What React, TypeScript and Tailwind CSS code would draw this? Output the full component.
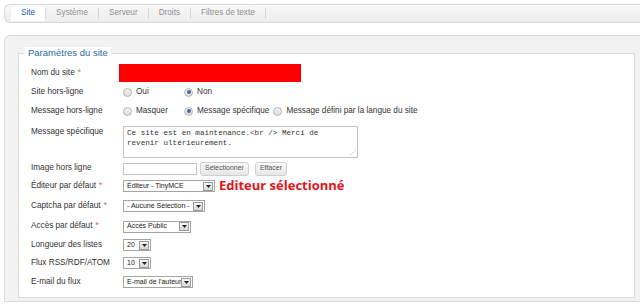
import React from 'react';

const TABS = ['Site', 'Système', 'Serveur', 'Droits', 'Filtres de texte'];

const Radio = ({ checked }: { checked?: boolean }) => (
  <span className="inline-flex items-center justify-center w-[9px] h-[9px] rounded-full border border-[#b5b5b5] bg-gradient-to-b from-[#f4f4f4] to-[#dcdcdc] mr-[4px]">
    {checked && <span className="w-[4px] h-[4px] rounded-full bg-[#3b6aa0]" />}
  </span>
);

const Select = ({ value, width }: { value: string; width: string }) => (
  <div className={`flex items-center h-[12px] border border-[#a5a5a5] bg-white ${width}`}>
    <span className="flex-1 pl-[3px] text-[7px] text-[#222] whitespace-nowrap overflow-hidden">{value}</span>
    <span className="flex items-center justify-center w-[10px] h-[9px] mr-[1px] border border-[#9a9a9a] bg-gradient-to-b from-[#f7f7f7] to-[#d8d8d8]">
      <svg width="5" height="3" viewBox="0 0 5 3"><path d="M0 0h5L2.5 3z" fill="#222" /></svg>
    </span>
  </div>
);

const Label = ({ text, req }: { text: string; req?: boolean }) => (
  <div className="w-[92px] shrink-0 whitespace-nowrap">
    {text}
    {req && <span className="text-[#e05a3a] ml-[3px]">*</span>}
  </div>
);

export default function App() {
  return (
    <div className="w-[640px] h-[304px] bg-white overflow-hidden text-[8.2px] text-[#333]" style={{ fontFamily: '"Liberation Sans", Arial, sans-serif' }}>
      {/* Tabs */}
      <div className="pt-[4px] pl-[4px]">
        <div className="flex items-center h-[19px] border border-r-0 border-[#d8d8d8] rounded-l-[6px] bg-gradient-to-b from-[#f8f8f8] to-[#ededed] pl-[6px]">
          {TABS.map((t, i) => (
            <div key={t} className="flex items-center h-full">
              <div className={`flex items-center h-[14px] px-[10px] ${i === 0 ? 'bg-white text-[#1d5d99]' : 'text-[#8f8f8f]'}`}>{t}</div>
              <div className="w-px h-[11px] bg-[#d6d6d6]" />
            </div>
          ))}
        </div>
      </div>

      {/* Panel */}
      <div className="mt-[12px] ml-[4px] h-[267px] border border-r-0 border-[#dcdcdc] rounded-tl-[6px] bg-[#f2f2f2] pt-[17px] pl-[13px] pr-[5px]">
        <div className="relative h-[245px] border border-[#dadada] bg-white pt-[9px] pl-[12px]">
          <div className="absolute -top-[7px] left-[6px] px-[3px] bg-white text-[9.5px] leading-[12px] text-[#2d6aa3]">Paramètres du site</div>

          <div className="flex flex-col">
            <div className="flex items-center h-[20px]">
              <Label text="Nom du site" req />
              <div className="w-[182px] h-[18px] -ml-[4px] bg-[#ff0000]" />
            </div>

            <div className="flex items-center h-[19px]">
              <Label text="Site hors-ligne" />
              <div className="flex items-center w-[61px]"><Radio />Oui</div>
              <div className="flex items-center"><Radio checked />Non</div>
            </div>

            <div className="flex items-center h-[19px] whitespace-nowrap">
              <Label text="Message hors-ligne" />
              <div className="flex items-center w-[61px]"><Radio />Masquer</div>
              <div className="flex items-center mr-[4px]"><Radio checked />Message spécifique</div>
              <div className="flex items-center"><Radio />Message défini par la langue du site</div>
            </div>

            <div className="flex items-start h-[39px] pt-[5px]">
              <Label text="Message spécifique" />
              <div className="relative w-[235px] h-[32px] border border-[#c4c4c4] bg-white px-[3px] pt-[1px] text-[7.6px] leading-[10px] text-[#333]" style={{ fontFamily: '"Liberation Mono", "Courier New", monospace' }}>
                Ce site est en maintenance.&lt;br /&gt; Merci de
                <br />revenir ultérieurement.
                <span className="absolute right-[1px] bottom-[1px] text-[6px] leading-[6px] text-[#aaa]">⋰</span>
              </div>
            </div>

            <div className="flex items-center h-[17px]">
              <Label text="Image hors ligne" />
              <div className="w-[74px] h-[12px] border border-[#c4c4c4] bg-white" />
              <div className="ml-[3px] h-[14px] px-[4px] flex items-center border border-[#cfcfcf] rounded-[3px] bg-gradient-to-b from-[#fafafa] to-[#e6e6e6] text-[7px] text-[#555]">Sélectionner</div>
              <div className="ml-[6px] h-[14px] px-[4px] flex items-center border border-[#cfcfcf] rounded-[3px] bg-gradient-to-b from-[#fafafa] to-[#e6e6e6] text-[7px] text-[#555]">Effacer</div>
            </div>

            <div className="flex items-center h-[18px]">
              <Label text="Éditeur par défaut" req />
              <Select value="Éditeur - TinyMCE" width="w-[92px]" />
              <span className="ml-[4px] text-[13px] font-bold text-[#e3141b]" style={{ fontFamily: '"Open Sans", "Noto Sans", sans-serif' }}>Editeur sélectionné</span>
            </div>

            <div className="flex items-center h-[22px]">
              <Label text="Captcha par défaut" req />
              <Select value="- Aucune Sélection -" width="w-[82px]" />
            </div>

            <div className="flex items-center h-[19px]">
              <Label text="Accès par défaut" req />
              <Select value="Accès Public" width="w-[68px]" />
            </div>

            <div className="flex items-center h-[18px]">
              <Label text="Longueur des listes" />
              <Select value="20" width="w-[28px]" />
            </div>

            <div className="flex items-center h-[18px]">
              <Label text="Flux RSS/RDF/ATOM" />
              <Select value="10" width="w-[28px]" />
            </div>

            <div className="flex items-center h-[20px]">
              <Label text="E-mail du flux" />
              <Select value="E-mail de l'auteur" width="w-[70px]" />
            </div>
          </div>
        </div>
      </div>
    </div>
  );
}
